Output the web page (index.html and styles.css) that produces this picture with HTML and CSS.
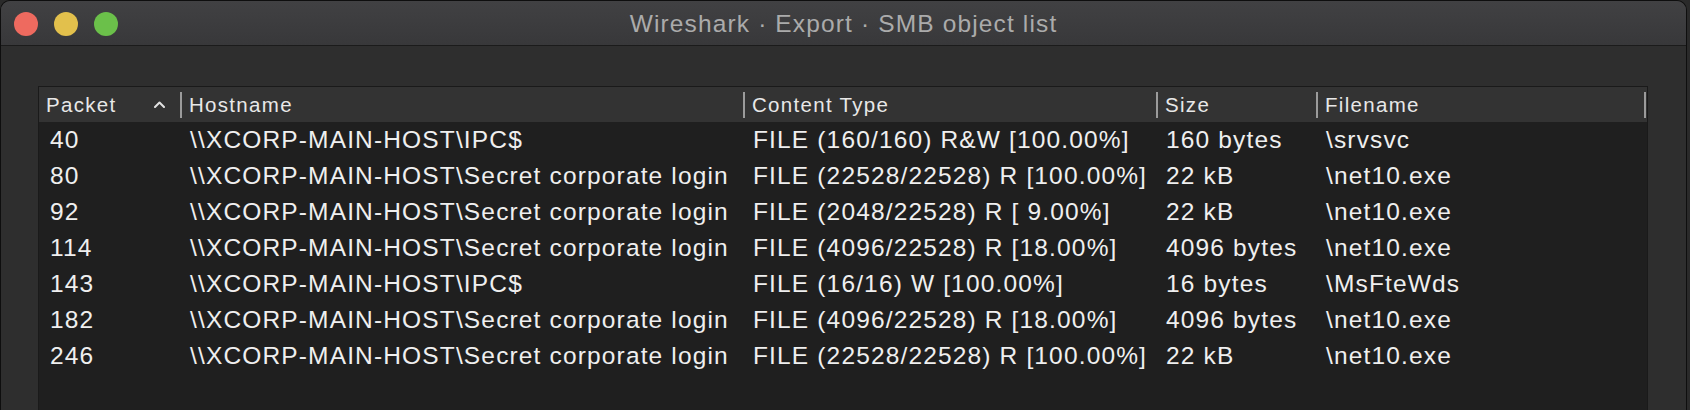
FILE: index.html
```html
<!DOCTYPE html>
<html lang="en">
<head>
<meta charset="utf-8">
<title>Wireshark · Export · SMB object list</title>
<link rel="stylesheet" href="styles.css">
</head>
<body>
<div class="window">
  <div class="titlebar">
    <div class="lights">
      <span class="light red"></span>
      <span class="light yellow"></span>
      <span class="light green"></span>
    </div>
    <div class="title">Wireshark · Export · SMB object list</div>
    <div></div>
  </div>
  <div class="content">
    <div class="table">
      <div class="thead">
        <div class="th"><span class="label">Packet</span><svg class="sort" width="11" height="7" viewBox="0 0 11 7"><polyline points="1,6 5.5,1.5 10,6" fill="none" stroke="#e2e2e2" stroke-width="2" stroke-linecap="round" stroke-linejoin="round"/></svg><span class="sep"></span></div>
        <div class="th"><span class="label">Hostname</span><span class="sep"></span></div>
        <div class="th"><span class="label">Content Type</span><span class="sep"></span></div>
        <div class="th"><span class="label">Size</span><span class="sep"></span></div>
        <div class="th"><span class="label">Filename</span><span class="sep"></span></div>
        <div class="th th-rest"></div>
      </div>
      <div class="tbody">
        <div class="tr"><div class="td">40</div><div class="td">\\XCORP-MAIN-HOST\IPC$</div><div class="td">FILE (160/160) R&amp;W [100.00%]</div><div class="td">160 bytes</div><div class="td">\srvsvc</div><div class="td"></div></div>
        <div class="tr"><div class="td">80</div><div class="td">\\XCORP-MAIN-HOST\Secret corporate login</div><div class="td">FILE (22528/22528) R [100.00%]</div><div class="td">22 kB</div><div class="td">\net10.exe</div><div class="td"></div></div>
        <div class="tr"><div class="td">92</div><div class="td">\\XCORP-MAIN-HOST\Secret corporate login</div><div class="td">FILE (2048/22528) R [ 9.00%]</div><div class="td">22 kB</div><div class="td">\net10.exe</div><div class="td"></div></div>
        <div class="tr"><div class="td">114</div><div class="td">\\XCORP-MAIN-HOST\Secret corporate login</div><div class="td">FILE (4096/22528) R [18.00%]</div><div class="td">4096 bytes</div><div class="td">\net10.exe</div><div class="td"></div></div>
        <div class="tr"><div class="td">143</div><div class="td">\\XCORP-MAIN-HOST\IPC$</div><div class="td">FILE (16/16) W [100.00%]</div><div class="td">16 bytes</div><div class="td">\MsFteWds</div><div class="td"></div></div>
        <div class="tr"><div class="td">182</div><div class="td">\\XCORP-MAIN-HOST\Secret corporate login</div><div class="td">FILE (4096/22528) R [18.00%]</div><div class="td">4096 bytes</div><div class="td">\net10.exe</div><div class="td"></div></div>
        <div class="tr"><div class="td">246</div><div class="td">\\XCORP-MAIN-HOST\Secret corporate login</div><div class="td">FILE (22528/22528) R [100.00%]</div><div class="td">22 kB</div><div class="td">\net10.exe</div><div class="td"></div></div>
      </div>
    </div>
  </div>
</div>
</body>
</html>
```
FILE: styles.css
```css
html, body {
  margin: 0;
  height: 410px;
  overflow: hidden;
  background: #2a2a2a;
}

body {
  font-family: "Liberation Sans", Arial, sans-serif;
}

.window {
  --cols: 143px 563px 413px 160px 328px 1fr;
  width: 1687px;
  height: 410px;
  box-sizing: border-box;
  display: flex;
  flex-direction: column;
  border: 1px solid #0e0e0e;
  border-bottom: none;
  border-radius: 10px 10px 0 0;
  background: #2e2e2e;
  overflow: hidden;
}

.titlebar {
  height: 45px;
  flex: none;
  box-sizing: border-box;
  padding: 2px 13px 0;
  display: grid;
  grid-template-columns: 1fr auto 1fr;
  align-items: center;
  background: linear-gradient(#414143, #38383a);
  border-bottom: 1px solid #1b1b1b;
}

.lights {
  display: flex;
  gap: 16px;
}

.light {
  width: 24px;
  height: 24px;
  border-radius: 50%;
}

.red { background: #ee6a5f; }
.yellow { background: #e2c04c; }
.green { background: #6bc04a; }

.title {
  color: #ababab;
  font-size: 24.5px;
  letter-spacing: 1.14px;
  white-space: nowrap;
}

.content {
  flex: 1;
  min-height: 0;
  display: flex;
  flex-direction: column;
  padding: 40px 38px 0 37px;
}

.table {
  flex: 1;
  min-height: 0;
  overflow: hidden;
  border: 1px solid #1a1a1a;
  border-bottom: none;
  background: #1f1f1f;
}

.thead {
  display: grid;
  grid-template-columns: var(--cols);
  height: 35px;
  background: #333333;
}

.th {
  display: flex;
  align-items: center;
  padding-left: 7px;
  color: #e8e8e8;
  font-size: 20.5px;
  letter-spacing: 1.3px;
  white-space: nowrap;
  min-width: 0;
}

.th-rest {
  padding: 0;
}

.sep {
  margin-left: auto;
  width: 2px;
  height: 26px;
  background: #9b9b9b;
  flex: none;
}

.sort {
  margin: 0 15px 0 auto;
  flex: none;
}

.sort + .sep {
  margin-left: 0;
}

.tr {
  display: grid;
  grid-template-columns: var(--cols);
  height: 36px;
}

.td {
  padding-left: 8px;
  font-size: 24.5px;
  letter-spacing: 1.15px;
  line-height: 36px;
  color: #efefef;
  white-space: pre;
  overflow: hidden;
  min-width: 0;
}

.td:first-child {
  padding-left: 11px;
}

.td:last-child {
  padding: 0;
}
```
